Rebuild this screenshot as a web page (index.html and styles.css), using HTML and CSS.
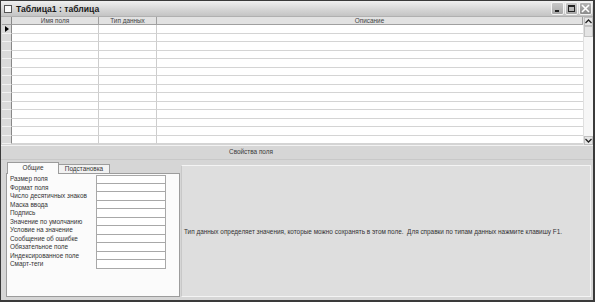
FILE: index.html
```html
<html>

<head>
    <meta charset="UTF-8">
    <link rel="stylesheet" href="styles.css">
</head>

<body>
    <div class="window">
        <div class="titlebar">
            <span class="ticon"></span>
            <span class="title">Таблица1 : таблица</span>
            <div class="tbtns">
                <span class="tbtn">
                    <svg width="9" height="9" viewBox="0 0 9 9"><rect x="2" y="6" width="4" height="2" fill="#222"/></svg>
                </span>
                <span class="tbtn">
                    <svg width="9" height="9" viewBox="0 0 9 9"><rect x="1.5" y="1.5" width="6" height="6" fill="none" stroke="#222"/><rect x="1" y="1" width="7" height="2" fill="#222"/></svg>
                </span>
                <span class="tbtn close">
                    <svg width="9" height="9" viewBox="0 0 9 9"><path d="M1 1 L8 8 M8 1 L1 8" stroke="#fff" stroke-width="1.6"/></svg>
                </span>
            </div>
        </div>

        <div class="sheet">
            <div class="grid" id="grid">
                <div class="hcell sel"></div>
                <div class="hcell">Имя поля</div>
                <div class="hcell">Тип данных</div>
                <div class="hcell">Описание</div>
            </div>
            <div class="vscroll">
                <span class="sbtn">
                    <svg width="7" height="5" viewBox="0 0 7 5"><path d="M0.5 4 L3.5 1 L6.5 4" fill="none" stroke="#222" stroke-width="1.3"/></svg>
                </span>
                <span class="sthumb"></span>
                <span class="strack"></span>
                <span class="sbtn">
                    <svg width="7" height="5" viewBox="0 0 7 5"><path d="M0.5 1 L3.5 4 L6.5 1" fill="none" stroke="#222" stroke-width="1.3"/></svg>
                </span>
            </div>
        </div>

        <div class="caption">Свойства поля</div>

        <div class="props">
            <div class="tabs">
                <div class="tabrow">
                    <span class="tab active">Общие</span>
                    <span class="tab">Подстановка</span>
                </div>
                <div class="tabpanel">
                    <div class="fields" id="fields"></div>
                </div>
            </div>
            <div class="help">
                Тип данных определяет значения, которые можно сохранять в этом поле.&nbsp; Для справки по типам данных нажмите клавишу F1.
            </div>
        </div>
    </div>
    <script>
        const grid = document.getElementById("grid");
        for (let i = 0; i < 14; i++) {
            const sel = document.createElement("div");
            sel.className = "cell sel" + (i == 0 ? " cur" : "");
            grid.appendChild(sel);
            for (let c = 0; c < 3; c++) {
                const d = document.createElement("div");
                d.className = "cell";
                grid.appendChild(d);
            }
        }
        const names = ["Размер поля", "Формат поля", "Число десятичных знаков", "Маска ввода", "Подпись",
            "Значение по умолчанию", "Условие на значение", "Сообщение об ошибке", "Обязательное поле",
            "Индексированное поле", "Смарт-теги"];
        const fields = document.getElementById("fields");
        names.forEach(n => {
            const l = document.createElement("span");
            l.className = "flabel";
            l.textContent = n;
            const v = document.createElement("span");
            v.className = "fval";
            fields.appendChild(l);
            fields.appendChild(v);
        });
    </script>
</body>

</html>
```

FILE: styles.css
```css
* {
    margin: 0;
    padding: 0;
    box-sizing: border-box;
}

body {
    font-family: "Liberation Sans", Arial, sans-serif;
    background-color: #fff;
}

.window {
    width: 595px;
    height: 302px;
    border: 1px solid #3a3a3a;
    border-bottom-width: 2px;
    border-right-width: 2px;
    background-color: #d6d6d6;
    display: flex;
    flex-direction: column;
}

.titlebar {
    height: 16px;
    display: flex;
    align-items: center;
    padding-left: 3px;
    background: linear-gradient(#f0f0f0, #d4d4d4 60%, #c4c4c4);
    border-bottom: 1px solid #b0b0b0;
}

.ticon {
    width: 8px;
    height: 8px;
    border: 1px solid #555;
    background-color: #fafafa;
    margin-right: 4px;
}

.title {
    font-weight: bold;
    font-size: 8.6px;
    color: #1a1a1a;
    flex: 1;
}

.tbtns {
    display: flex;
    gap: 1px;
    padding-right: 1px;
}

.tbtn {
    width: 13px;
    height: 13px;
    border: 1px solid #f4f4f4;
    border-radius: 2px;
    background: linear-gradient(#c8c8c8, #a8a8a8);
    display: flex;
    align-items: center;
    justify-content: center;
}

.tbtn.close {
    background: linear-gradient(#b4b4b4, #8c8c8c);
}

.sheet {
    height: 129px;
    display: flex;
    padding-left: 1px;
    background-color: #d4d4d4;
    border-bottom: 1px solid #f2f2f2;
}

.grid {
    flex: 1;
    display: grid;
    grid-template-columns: 10px 87px 58px 1fr;
    grid-template-rows: 8px;
    grid-auto-rows: 8.5px;
    align-content: start;
}

.hcell {
    background-color: #e2e2e2;
    border-right: 1px solid #a0a0a0;
    border-bottom: 1px solid #a0a0a0;
    font-size: 6.4px;
    color: #444;
    text-align: center;
    line-height: 7px;
    overflow: hidden;
}

.cell {
    background-color: #fff;
    border-right: 1px solid #cdcdcd;
    border-bottom: 1px solid #d4d4d4;
}

.cell:nth-child(4n) {
    border-right: none;
}

.sel {
    background-color: #dadada;
    border-right: 1px solid #888;
    border-bottom: 1px solid #f2f2f2;
}

.hcell.sel {
    border-bottom: 1px solid #a0a0a0;
}

.cur {
    position: relative;
}

.cur::after {
    content: "";
    position: absolute;
    left: 3px;
    top: 1px;
    border-left: 4px solid #000;
    border-top: 3px solid transparent;
    border-bottom: 3px solid transparent;
}

.vscroll {
    width: 10px;
    display: flex;
    flex-direction: column;
    background-color: #f6f6f6;
    border-left: 1px solid #e0e0e0;
}

.sbtn {
    height: 9px;
    display: flex;
    align-items: center;
    justify-content: center;
    background-color: #e6e6e6;
    border: 1px solid #c0c0c0;
}

.sthumb {
    height: 11px;
    background-color: #e4e4e4;
    border: 1px solid #c4c4c4;
}

.strack {
    flex: 1;
}

.caption {
    height: 14px;
    font-size: 6.4px;
    color: #3a3a3a;
    text-align: center;
    line-height: 12px;
    padding-right: 92px;
    border-bottom: 1px solid #c8c8c8;
}

.props {
    flex: 1;
    display: flex;
    padding: 1px 2px 3px 5px;
    gap: 1px;
}

.tabs {
    width: 174px;
    display: flex;
    flex-direction: column;
}

.tabrow {
    display: flex;
    align-items: flex-end;
    height: 12px;
    padding-left: 1px;
}

.tab {
    font-size: 6.4px;
    color: #333;
    text-align: center;
    border: 1px solid #9c9c9c;
    border-bottom: none;
    line-height: 8px;
    height: 9px;
    background-color: #f2f2f2;
}

.tab:nth-child(2) {
    width: 51px;
    border-left: none;
}

.tab.active {
    width: 52px;
    height: 12px;
    line-height: 10px;
    background-color: #fbfbfb;
    position: relative;
    top: 1px;
}

.tabpanel {
    flex: 1;
    background-color: #fbfbfb;
    border: 1px solid #9c9c9c;
    padding: 1px 12px 0 3px;
}

.fields {
    display: grid;
    grid-template-columns: 86px 70px;
    grid-auto-rows: 8.5px;
}

.flabel {
    font-size: 6.4px;
    color: #333;
    line-height: 8.5px;
    white-space: nowrap;
}

.fval {
    background-color: #fff;
    border: 1px solid #a8a8a8;
    border-top: none;
}

.fval:nth-child(2) {
    border-top: 1px solid #a8a8a8;
}

.help {
    flex: 1;
    margin-top: 4px;
    background-color: #dedede;
    border-top: 1px solid #f4f4f4;
    border-left: 1px solid #c8c8c8;
    border-right: 1px solid #f4f4f4;
    border-bottom: 1px solid #f4f4f4;
    display: flex;
    align-items: center;
    padding-left: 2px;
    font-size: 6.4px;
    color: #333;
    white-space: nowrap;
}
```
